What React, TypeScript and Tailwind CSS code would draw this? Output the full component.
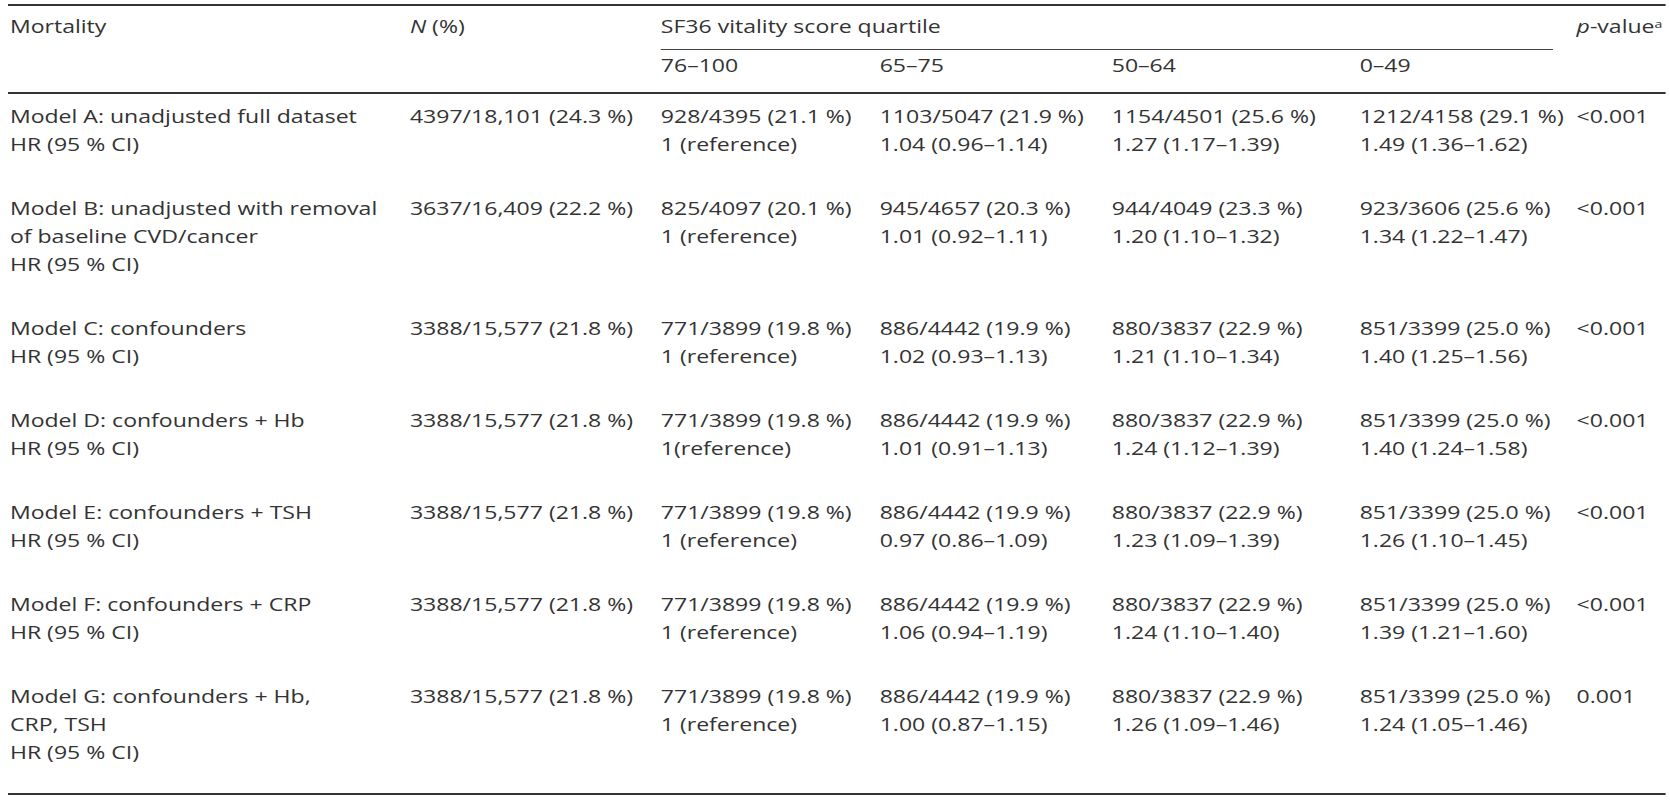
import React from 'react';

type Row = {
  label: string[];
  n: string;
  counts: string[];
  hr: string[];
  p: string;
};

const same = ['771/3899 (19.8 %)', '886/4442 (19.9 %)', '880/3837 (22.9 %)', '851/3399 (25.0 %)'];

const rows: Row[] = [
  {
    label: ['Model A: unadjusted full dataset', 'HR (95 % CI)'],
    n: '4397/18,101 (24.3 %)',
    counts: ['928/4395 (21.1 %)', '1103/5047 (21.9 %)', '1154/4501 (25.6 %)', '1212/4158 (29.1 %)'],
    hr: ['1 (reference)', '1.04 (0.96–1.14)', '1.27 (1.17–1.39)', '1.49 (1.36–1.62)'],
    p: '<0.001',
  },
  {
    label: ['Model B: unadjusted with removal', 'of baseline CVD/cancer', 'HR (95 % CI)'],
    n: '3637/16,409 (22.2 %)',
    counts: ['825/4097 (20.1 %)', '945/4657 (20.3 %)', '944/4049 (23.3 %)', '923/3606 (25.6 %)'],
    hr: ['1 (reference)', '1.01 (0.92–1.11)', '1.20 (1.10–1.32)', '1.34 (1.22–1.47)'],
    p: '<0.001',
  },
  {
    label: ['Model C: confounders', 'HR (95 % CI)'],
    n: '3388/15,577 (21.8 %)',
    counts: same,
    hr: ['1 (reference)', '1.02 (0.93–1.13)', '1.21 (1.10–1.34)', '1.40 (1.25–1.56)'],
    p: '<0.001',
  },
  {
    label: ['Model D: confounders + Hb', 'HR (95 % CI)'],
    n: '3388/15,577 (21.8 %)',
    counts: same,
    hr: ['1(reference)', '1.01 (0.91–1.13)', '1.24 (1.12–1.39)', '1.40 (1.24–1.58)'],
    p: '<0.001',
  },
  {
    label: ['Model E: confounders + TSH', 'HR (95 % CI)'],
    n: '3388/15,577 (21.8 %)',
    counts: same,
    hr: ['1 (reference)', '0.97 (0.86–1.09)', '1.23 (1.09–1.39)', '1.26 (1.10–1.45)'],
    p: '<0.001',
  },
  {
    label: ['Model F: confounders + CRP', 'HR (95 % CI)'],
    n: '3388/15,577 (21.8 %)',
    counts: same,
    hr: ['1 (reference)', '1.06 (0.94–1.19)', '1.24 (1.10–1.40)', '1.39 (1.21–1.60)'],
    p: '<0.001',
  },
  {
    label: ['Model G: confounders + Hb,', 'CRP, TSH', 'HR (95 % CI)'],
    n: '3388/15,577 (21.8 %)',
    counts: same,
    hr: ['1 (reference)', '1.00 (0.87–1.15)', '1.26 (1.09–1.46)', '1.24 (1.05–1.46)'],
    p: '0.001',
  },
];

const cols = 'grid grid-cols-[312.5px_196px_171px_181.3px_193.7px_169.5px_70.3px]';

function DataRow({ row, last }: { row: Row; last: boolean }) {
  const pad = last ? 'pt-2 pb-[27px]' : 'pt-2 pb-[28px]';
  return (
    <div className={`${cols} ${pad}`}>
      <div className="pl-[1.5px]">
        {row.label.map((l) => (
          <div key={l} className="whitespace-nowrap">{l}</div>
        ))}
      </div>
      <div className="pl-[1.5px] whitespace-nowrap">{row.n}</div>
      {row.counts.map((c, i) => (
        <div key={i} className="pl-[1.5px] whitespace-nowrap">
          <div>{c}</div>
          <div>{row.hr[i]}</div>
        </div>
      ))}
      <div className="pl-[1.5px] whitespace-nowrap">{row.p}</div>
    </div>
  );
}

export default function App(): JSX.Element {
  return (
    <div className="min-h-screen bg-white pt-1 pl-2 overflow-hidden">
      <div
        className="w-[1294.5px] origin-top-left scale-x-[1.28] text-[18px] leading-[28px] text-[#333]"
        style={{ fontFamily: '"Open Sans", "Noto Sans", sans-serif' }}
      >
        {/* header */}
        <div className="border-t-2 border-[#333]">
          <div className={`${cols} grid-rows-[auto_auto]`}>
            <div className="row-span-2 pl-[1.5px] pt-[6px]">Mortality</div>
            <div className="row-span-2 pl-[1.5px] pt-[6px]">
              <i>N</i> (%)
            </div>
            <div className="col-span-4 ml-[1.5px] mr-[17px] pt-[6px] pb-[9px] border-b-[1.5px] border-[#444]">
              SF36 vitality score quartile
            </div>
            <div className="row-span-2 pl-[1.5px] pt-[6px] whitespace-nowrap">
              <i>p</i>-value<sup className="text-[11px]">a</sup>
            </div>
            {['76–100', '65–75', '50–64', '0–49'].map((q) => (
              <div key={q} className="pl-[1.5px] pt-[1px] pb-[13px]">{q}</div>
            ))}
          </div>
        </div>
        {/* body */}
        <div className="border-t-2 border-b-2 border-[#333]">
          {rows.map((r, i) => (
            <DataRow key={i} row={r} last={i === rows.length - 1} />
          ))}
        </div>
      </div>
    </div>
  );
}
